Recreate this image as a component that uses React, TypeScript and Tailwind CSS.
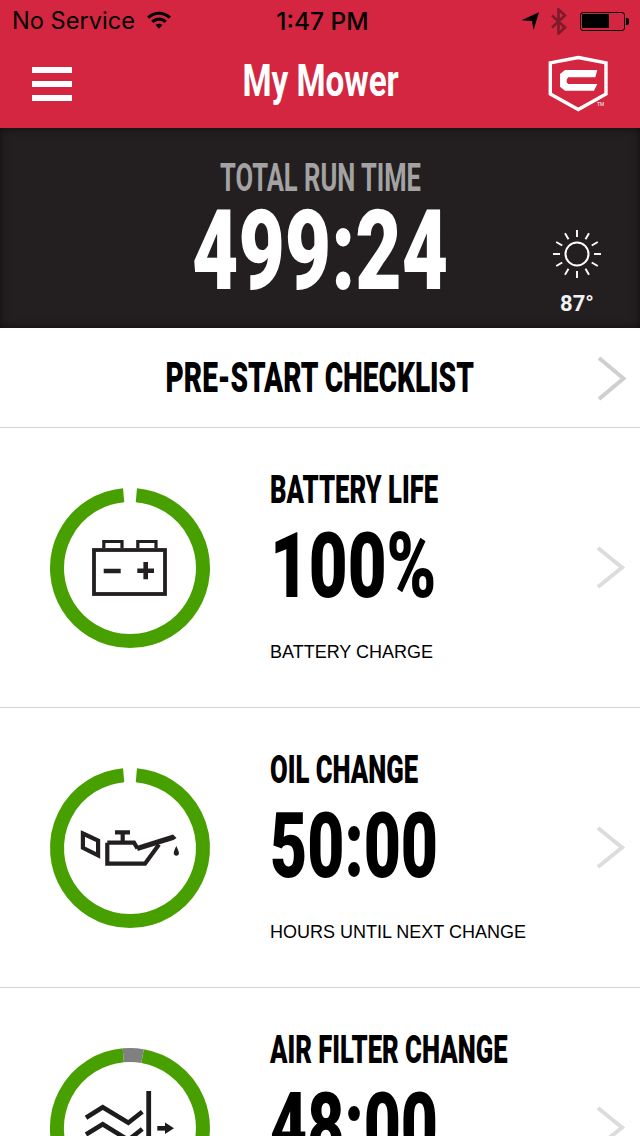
import React from "react";

const RING_GREEN = "#48a000";

function Ring({ gray, children }: { gray?: boolean; children: React.ReactNode }) {
  return (
    <svg width="160" height="160" viewBox="0 0 160 160" className="shrink-0 overflow-visible">
      {gray ? (
        <>
          <path d="M92.55 8.1 A73 73 0 1 1 73.3 7.3" fill="none" stroke={RING_GREEN} strokeWidth="14" />
          <path d="M73.3 7.3 A73 73 0 0 1 92.55 8.1" fill="none" stroke="#808080" strokeWidth="14" />
        </>
      ) : (
        <path d="M86.36 7.28 A73 73 0 1 1 73.64 7.28" fill="none" stroke={RING_GREEN} strokeWidth="14" />
      )}
      {children}
    </svg>
  );
}

function BatteryIcon() {
  return (
    <g fill="none" stroke="#231f20">
      <rect x="44" y="62" width="71" height="44" strokeWidth="3.8" />
      <path d="M53.8 60 V53.5 H72 V60 M87.8 60 V53.5 H106 V60" strokeWidth="3.2" />
      <path d="M53.7 83 H70.7 M87.3 82.7 H104 M95.7 74 V91.3" strokeWidth="4.6" />
    </g>
  );
}

function OilIcon() {
  return (
    <g>
      <g fill="none" stroke="#231f20" strokeWidth="4.2">
        <path d="M32.9 65.5 L48.1 72.5 V87.4 L32.9 79.8 Z" />
        <path d="M57.3 74.7 H84 L87.5 80.5 M57.3 74.7 V95.7 H95 L109 76.5" />
        <path d="M72.7 65 V74 M65 64.4 H80" />
      </g>
      <path d="M86.5 78 L123 66.5 L126.5 70 L123.5 72 L108 76.8 L87.8 83 Z" fill="#231f20" />
      <path d="M126.3 78 C125 81 123.7 83 123.7 85.5 A2.7 2.7 0 0 0 129 85.5 C129 83 127.5 81 126.3 78 Z" fill="#231f20" />
    </g>
  );
}

function FilterIcon() {
  return (
    <g>
      <g fill="none" stroke="#1c1c1c" strokeWidth="4.6">
        <path d="M36 69.7 L52.7 59.3 L78.3 74.7 L92.3 63.7" />
        <path d="M36 86.5 L52.7 76.3 L78.3 92 L92.3 81" />
        <path d="M98.7 43 V130" strokeWidth="4.8" />
        <path d="M107.3 80.3 H117" />
      </g>
      <path d="M115 74.5 L124 80.3 L115 86 Z" fill="#1c1c1c" />
    </g>
  );
}

function Chevron({ big }: { big?: boolean }) {
  return big ? (
    <svg width="30" height="48" viewBox="0 0 30 48" className="shrink-0">
      <path d="M2 2 L26.5 22.5 L2 43" fill="none" stroke="#cfcfcf" strokeWidth="4" />
    </svg>
  ) : (
    <svg width="30" height="46" viewBox="0 0 30 46" className="shrink-0">
      <path d="M2 2 L26 21.5 L2 41" fill="none" stroke="#dcdcdc" strokeWidth="4" />
    </svg>
  );
}

function Sun() {
  const rays = Array.from({ length: 12 }, (_, i) => {
    const a = (i * Math.PI) / 6;
    return (
      <line
        key={i}
        x1={26 + 17 * Math.sin(a)}
        y1={26 - 17 * Math.cos(a)}
        x2={26 + 24 * Math.sin(a)}
        y2={26 - 24 * Math.cos(a)}
        stroke="#fff"
        strokeWidth="1.9"
      />
    );
  });
  return (
    <svg width="52" height="52" viewBox="0 0 52 52">
      <circle cx="26" cy="26" r="11.5" fill="none" stroke="#fff" strokeWidth="2" />
      {rays}
    </svg>
  );
}

function Logo() {
  return (
    <div className="relative h-[58px] w-[62px]">
      <svg width="62" height="58" viewBox="547 55 62 58">
        <path d="M578.3 57.5 L606 62.8 V94 L578.3 109.5 L550.3 94 V62.8 Z" fill="none" stroke="#fff" strokeWidth="3.4" />
        <path
          d="M560 74 L565 70 H597.3 L595.3 77.3 H568.3 L566.7 79.5 V82.5 L568.3 84 H597.3 L594 90.7 H565 L560 86.7 Z"
          fill="#fff"
        />
      </svg>
      <span className="absolute left-[50px] top-[47px] font-['Liberation_Sans',sans-serif] text-[5px] leading-none text-white">
        TM
      </span>
    </div>
  );
}

function Row({
  title,
  value,
  sub,
  icon,
  gray,
  valueClass,
}: {
  title: string;
  value: string;
  sub: string;
  icon: React.ReactNode;
  gray?: boolean;
  valueClass: string;
}) {
  return (
    <section className="flex h-[280px] shrink-0 border-b border-[#d4d4d4] pl-[50px] pt-[60px]">
      <Ring gray={gray}>{icon}</Ring>
      <div className="ml-[60px] mt-[-60px] w-[320px] shrink-0 font-['Roboto',sans-serif] font-black text-black">
        <div className="mt-[37px] h-[50px] origin-left scale-x-[0.675] whitespace-nowrap text-[38px] leading-[50px]">{title}</div>
        <div className={`mt-[2px] h-[100px] origin-left whitespace-nowrap text-[90px] leading-[100px] ${valueClass}`}>{value}</div>
        <div className="mt-[23px] whitespace-nowrap font-['Liberation_Sans',sans-serif] text-[18px] font-normal leading-[24px]">
          {sub}
        </div>
      </div>
      <div className="ml-[6px] mt-[58px]">
        <Chevron />
      </div>
    </section>
  );
}

export default function App() {
  return (
    <div className="flex h-[1136px] w-[640px] flex-col overflow-hidden bg-white">
      <header className="h-[128px] shrink-0 bg-[#d42640]">
        <div className="grid h-[40px] grid-cols-[1fr_auto_1fr] items-center pl-[12px] pr-[11px] pt-[2px] font-['Inter',sans-serif] leading-none text-black">
          <div className="flex items-center">
            <span className="whitespace-nowrap text-[23.6px]">No Service</span>
            <svg width="26" height="20" viewBox="0 0 26 20" className="ml-[11px] mt-[-3px]">
              <path d="M1 6.5 C8 0 18 0 25 6.5 L22.8 8.8 C17 3.5 9 3.5 3.2 8.8 Z M5.2 10.8 C10 6.5 16 6.5 20.8 10.8 L18.6 13 C15 10 11 10 7.4 13 Z M9.6 15 C11.5 13.4 14.5 13.4 16.4 15 L13 18.8 Z" fill="#000" />
            </svg>
          </div>
          <span className="ml-[4px] whitespace-nowrap text-[24.5px] font-medium">1:47 PM</span>
          <div className="flex items-center justify-end">
            <svg width="18" height="18" viewBox="0 0 18 18">
              <path d="M0.5 8.2 L18 0.2 L12.5 18 L11 9 Z" fill="#000" />
            </svg>
            <svg width="16" height="27" viewBox="0 0 16 27" className="ml-[12px]">
              <path d="M1 7.5 L14 19.5 L7.5 25.5 V1.5 L14 7.5 L1 19.5" fill="none" stroke="#7d1a2b" strokeWidth="2.6" />
            </svg>
            <div className="ml-[13px] flex items-center">
              <div className="flex h-[19px] w-[45px] items-center rounded-[3px] border-[1.5px] border-black px-[1px]">
                <div className="h-[14.5px] w-[27px] bg-black" />
              </div>
              <div className="ml-[1px] h-[7px] w-[3px] rounded-r-[2px] bg-black" />
            </div>
          </div>
        </div>
        <div className="grid h-[88px] grid-cols-[1fr_auto_1fr] items-center pl-[32px] pr-[31px]">
          <div className="flex w-[40px] flex-col gap-[8px]">
            <div className="h-[6px] bg-white" />
            <div className="h-[6px] bg-white" />
            <div className="h-[6px] bg-white" />
          </div>
          <h1 className="mb-[6px] scale-x-[0.755] whitespace-nowrap font-['Roboto',sans-serif] text-[44px] font-bold leading-none text-white">
            My Mower
          </h1>
          <div className="flex justify-end">
            <Logo />
          </div>
        </div>
      </header>

      <div className="relative flex h-[200px] shrink-0 flex-col items-center bg-[#231f20] font-['Roboto',sans-serif] shadow-[inset_0_0_10px_rgba(0,0,0,0.55)]">
        <div className="mt-[27px] h-[46px] scale-x-[0.655] whitespace-nowrap text-[39px] font-bold leading-[46px] text-[#a3a3a3]">
          TOTAL RUN TIME
        </div>
        <div className="scale-x-[0.715] whitespace-nowrap text-[112px] font-black leading-[100px] text-white">
          499:24
        </div>
        <div className="absolute left-[551px] top-[100px] flex w-[52px] flex-col items-center">
          <Sun />
          <span className="mt-[13px] text-[22px] font-bold leading-none text-[#f2f2f2]">87°</span>
        </div>
      </div>

      <section className="grid h-[100px] shrink-0 grid-cols-[1fr_auto_1fr] items-center border-b border-[#d4d4d4] pr-[13px] font-['Roboto',sans-serif]">
        <div />
        <span className="ml-[13px] scale-x-[0.668] whitespace-nowrap text-[42px] font-black leading-none text-black">
          PRE-START CHECKLIST
        </span>
        <div className="mt-[5px] flex justify-end">
          <Chevron big />
        </div>
      </section>

      <Row title="BATTERY LIFE" value="100%" sub="BATTERY CHARGE" icon={<BatteryIcon />} valueClass="scale-x-[0.745]" />
      <Row title="OIL CHANGE" value="50:00" sub="HOURS UNTIL NEXT CHANGE" icon={<OilIcon />} valueClass="scale-x-[0.713]" />
      <Row title="AIR FILTER CHANGE" value="48:00" sub="HOURS UNTIL NEXT CHANGE" icon={<FilterIcon />} gray valueClass="scale-x-[0.713]" />
    </div>
  );
}
